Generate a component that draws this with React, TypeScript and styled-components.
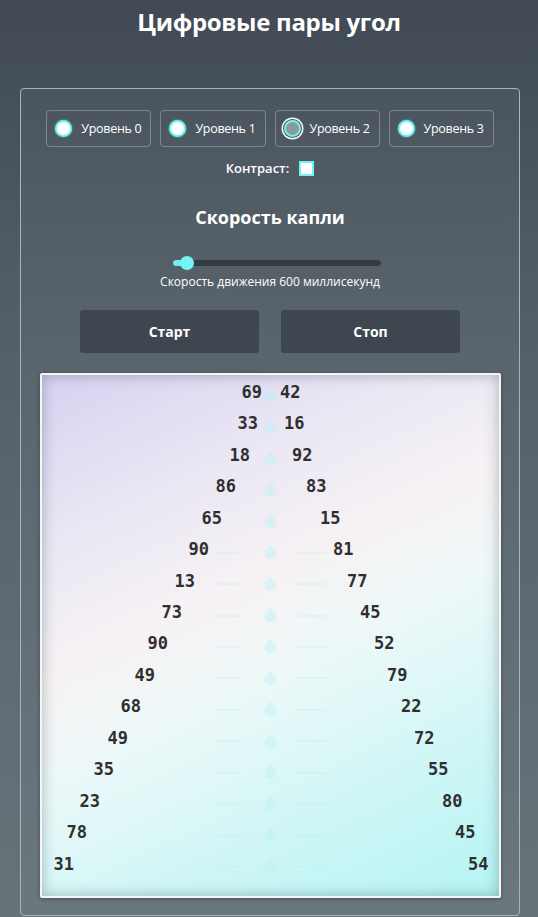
import styled, { createGlobalStyle } from 'styled-components';

const GlobalStyle = createGlobalStyle`
  html, body {
    margin: 0;
    padding: 0;
  }
  body {
    font-family: "Open Sans", "Noto Sans", sans-serif;
    color: #fff;
    background: linear-gradient(180deg, #414a54 0%, #55616a 40%, #66747a 100%);
    min-height: 917px;
  }
`;

const Page = styled.div`
  width: 538px;
  min-height: 917px;
  box-sizing: border-box;
  padding-top: 6px;
`;

const Title = styled.h1`
  margin: 0;
  font-size: 24px;
  line-height: 32px;
  font-weight: 700;
  text-align: center;
  letter-spacing: -0.3px;
`;

const Panel = styled.section`
  width: 500px;
  box-sizing: border-box;
  margin: 50px auto 0 20px;
  border: 1px solid #aab4b9;
  border-radius: 4px;
  background: rgba(255, 255, 255, 0.03);
  padding: 21px 0 17px;
  display: flex;
  flex-direction: column;
  align-items: center;
`;

const LevelRow = styled.div`
  display: flex;
  gap: 9px;
`;

const LevelButton = styled.label`
  display: flex;
  align-items: center;
  gap: 9px;
  height: 37px;
  box-sizing: border-box;
  padding: 0 9px 0 8px;
  border: 1px solid rgba(255, 255, 255, 0.28);
  border-radius: 4px;
  font-size: 12.5px;
  letter-spacing: -0.3px;
`;

const Radio = styled.span<{ $checked?: boolean }>`
  width: 17px;
  height: 17px;
  border-radius: 50%;
  box-sizing: border-box;
  background: ${(p) => (p.$checked ? '#8a9a9c' : '#ffffff')};
  border: 2px solid #6ff3f3;
  box-shadow: ${(p) =>
    p.$checked
      ? '0 0 0 1px #4b575e, 0 0 0 2.5px #f2f6f7'
      : '0 0 2px rgba(110, 243, 243, 0.8)'};
`;

const ContrastRow = styled.div`
  display: flex;
  align-items: center;
  gap: 10px;
  margin-top: 12px;
  font-size: 13px;
  font-weight: 600;
`;

const Checkbox = styled.span`
  width: 15px;
  height: 15px;
  box-sizing: border-box;
  background: #fff;
  border: 2px solid #6ff3f3;
`;

const SpeedTitle = styled.h2`
  margin: 28px 0 0;
  font-size: 18px;
  line-height: 24px;
  font-weight: 700;
`;

const Slider = styled.div`
  margin: 31px 0 0 14px;
  width: 208px;
  height: 6px;
  border-radius: 3px;
  background: #343b40;
  display: flex;
  align-items: center;
`;

const SliderFill = styled.div`
  height: 6px;
  border-radius: 3px 0 0 3px;
  background: #6ef0f0;
`;

const SliderThumb = styled.div`
  width: 14px;
  height: 14px;
  border-radius: 50%;
  background: #74f4f4;
  margin-left: -7px;
`;

const SpeedText = styled.div`
  margin-top: 8px;
  font-size: 12px;
  line-height: 16px;
`;

const ButtonRow = styled.div`
  display: flex;
  gap: 22px;
  margin-top: 20px;
`;

const ActionButton = styled.button`
  width: 179px;
  height: 43px;
  border: none;
  border-radius: 3px;
  background: #3e474f;
  color: #fff;
  font-family: "Open Sans", "Noto Sans", sans-serif;
  font-size: 14px;
  font-weight: 700;
`;

const Field = styled.div`
  margin-top: 20px;
  width: 461px;
  box-sizing: border-box;
  border: 2px solid #f4f6f6;
  border-radius: 2px;
  background: linear-gradient(155deg, #d6d2f1 0%, #ece8f4 25%, #f6f2f4 42%, #eef8f8 55%, #cff6f6 78%, #b6f4f4 100%);
  box-shadow: inset 0 0 14px rgba(40, 60, 70, 0.35), 0 1px 4px rgba(0, 0, 0, 0.3);
  padding: 1px 0 16px;
  display: flex;
  flex-direction: column;
`;

const Row = styled.div<{ $lines?: boolean }>`
  height: 31.47px;
  display: grid;
  grid-template-columns: 1fr 0 1fr;
  align-items: center;
  font-family: "DejaVu Sans Mono", "Liberation Mono", monospace;
  font-size: 17px;
  font-weight: 700;
  color: #2f2f30;
  background-repeat: no-repeat;
  background-size: 100% 2px;
  background-position: 0 62%;
  background-image: ${(p) =>
    p.$lines
      ? `linear-gradient(90deg,
          transparent 0 calc(50% - 55px),
          rgba(175, 240, 242, 0.25) calc(50% - 55px) calc(50% - 29px),
          transparent calc(50% - 29px) calc(50% + 26px),
          rgba(175, 240, 242, 0.25) calc(50% + 26px) calc(50% + 57px),
          transparent calc(50% + 57px))`
      : 'none'};
`;

const LeftNum = styled.span`
  text-align: right;
`;

const RightNum = styled.span`
  text-align: left;
`;

const DropCell = styled.span`
  display: flex;
  justify-content: center;
  padding-top: 5px;
`;

const Drop = () => (
  <svg width="13" height="15" viewBox="0 0 13 15" style={{ flexShrink: 0 }}>
    <path
      d="M6.5 0.5 C5.5 2.5 0.5 6.5 0.5 9.5 A6 5.5 0 0 0 12.5 9.5 C12.5 6.5 7.5 2.5 6.5 0.5 Z"
      fill="rgba(180, 242, 246, 0.4)"
    />
  </svg>
);

const pairs: [number, number][] = [
  [69, 42], [33, 16], [18, 92], [86, 83], [65, 15], [90, 81], [13, 77], [73, 45],
  [90, 52], [49, 79], [68, 22], [49, 72], [35, 55], [23, 80], [78, 45], [31, 54],
];

const gaps = [9, 13, 21, 35, 49, 62, 76, 89, 103, 116, 130, 143, 157, 171, 184, 197];

const levels = ['Уровень 0', 'Уровень 1', 'Уровень 2', 'Уровень 3'];

const App = () => {
  return (
    <Page>
      <GlobalStyle />
      <Title>Цифровые пары угол</Title>
      <Panel>
        <LevelRow>
          {levels.map((l, i) => (
            <LevelButton key={l}>
              <Radio $checked={i === 2} />
              {l}
            </LevelButton>
          ))}
        </LevelRow>
        <ContrastRow>
          Контраст:
          <Checkbox />
        </ContrastRow>
        <SpeedTitle>Скорость капли</SpeedTitle>
        <Slider>
          <SliderFill style={{ width: '14px' }} />
          <SliderThumb />
        </Slider>
        <SpeedText>Скорость движения 600 миллисекунд</SpeedText>
        <ButtonRow>
          <ActionButton>Старт</ActionButton>
          <ActionButton>Стоп</ActionButton>
        </ButtonRow>
        <Field>
          {pairs.map(([a, b], i) => (
            <Row key={i} $lines={i >= 5}>
              <LeftNum style={{ paddingRight: gaps[i] - 1 }}>{a}</LeftNum>
              <DropCell>
                <Drop />
              </DropCell>
              <RightNum style={{ paddingLeft: gaps[i] + 1 }}>{b}</RightNum>
            </Row>
          ))}
        </Field>
      </Panel>
    </Page>
  );
};

export default App;
